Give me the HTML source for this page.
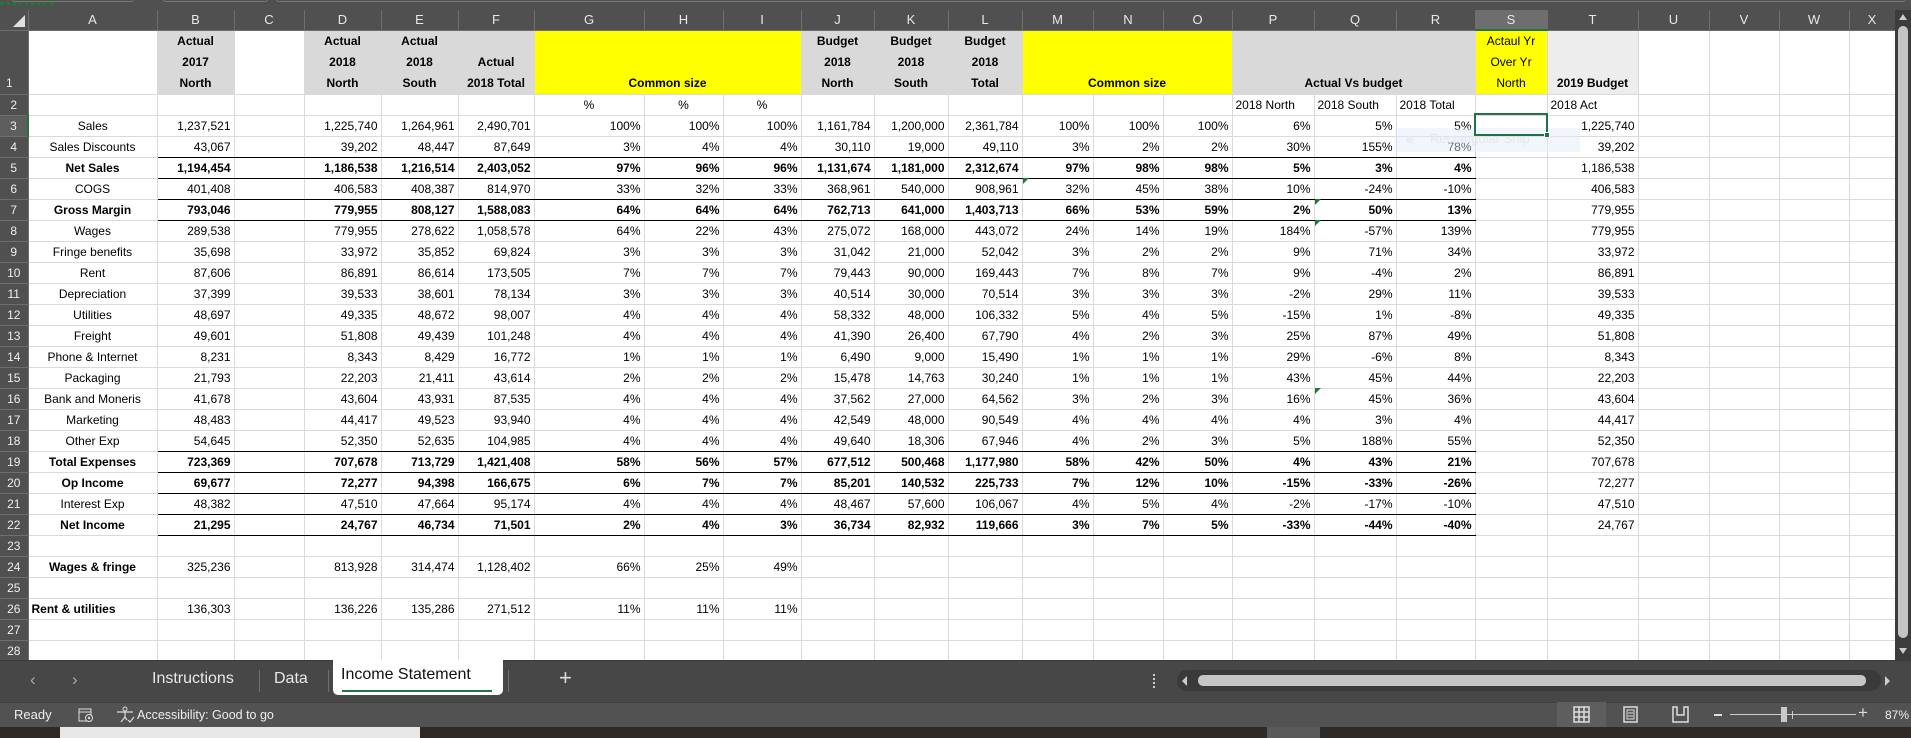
<!DOCTYPE html>
<html><head><meta charset="utf-8">
<style>
*{margin:0;padding:0;box-sizing:border-box}
body{width:1911px;height:738px;overflow:hidden;background:#505050;font-family:"Liberation Sans",Arial,sans-serif;position:relative}
#top{position:absolute;left:0;top:0;width:1911px;height:10px;background:#505050}
#grid{position:absolute;left:0;top:10px;border-collapse:collapse;table-layout:fixed;width:1895px}
#grid td,#grid th{border-right:1px solid #dadada;border-bottom:1px solid #dadada;height:21px;font-size:12px;white-space:nowrap;overflow:hidden;padding:0 3px;text-align:right;color:#000;background:#fff;font-weight:normal}
#grid tr.ch th{background:#505050;color:#e8e8e8;text-align:center;font-size:13px;height:20px;border-right:1px solid #6e6e6e;border-bottom:1px solid #6e6e6e}
#grid td.r{background:#505050;color:#eee;text-align:center;padding:0;border-right:1px solid #6e6e6e;border-bottom:1px solid #6e6e6e;font-size:12px}
#grid td.l{text-align:center}
#grid tr.b td{font-weight:bold}
#grid tr.b td.n{font-weight:normal}
#grid tr.b td.r{font-weight:normal}
#grid tr.u td:nth-child(n+3):nth-child(-n+19){border-bottom:1px solid #000}
#grid tr.h td{height:63px;vertical-align:bottom;text-align:center;font-weight:bold;line-height:21px}
.g{background:#d9d9d9!important}
.y{background:#ffff00!important}
.t{background:#ededed!important}
#grid td.c{text-align:center}
#grid td.lt{text-align:left}
.tri{position:absolute;width:0;height:0;border-top:6px solid #1e7b34;border-right:6px solid transparent}
</style></head><body>
<div id="top">
<div style="position:absolute;left:12px;top:-6px;width:122px;height:8px;border:1px solid #777;border-radius:3px"></div>
<div style="position:absolute;left:163px;top:-6px;width:105px;height:8px;border:1px solid #777;border-radius:3px"></div>
<div style="position:absolute;left:276px;top:-6px;width:1630px;height:8px;border:1px solid #777;border-radius:3px"></div>
<div style="position:absolute;left:0;top:2px;width:54px;height:3px;border-top:3px dotted #1e7b34"></div>
</div>
<table id="grid">
<colgroup>
<col style="width:28px"><col style="width:129px"><col style="width:77px"><col style="width:70px"><col style="width:77px"><col style="width:77px"><col style="width:76px"><col style="width:110px"><col style="width:79px"><col style="width:78px"><col style="width:73px"><col style="width:74px"><col style="width:74px"><col style="width:71px"><col style="width:70px"><col style="width:69px"><col style="width:82px"><col style="width:82px"><col style="width:79px"><col style="width:72px"><col style="width:91px"><col style="width:71px"><col style="width:70px"><col style="width:70px"><col style="width:46px">
</colgroup>
<tr class="ch"><th style="position:relative"><div style="position:absolute;right:3px;bottom:3px;width:0;height:0;border-left:12px solid transparent;border-bottom:12px solid #e0e0e0"></div></th><th>A</th><th>B</th><th>C</th><th>D</th><th>E</th><th>F</th><th>G</th><th>H</th><th>I</th><th>J</th><th>K</th><th>L</th><th>M</th><th>N</th><th>O</th><th>P</th><th>Q</th><th>R</th><th style="background:#6e6e6e;border-bottom:2px solid #217346">S</th><th>T</th><th>U</th><th>V</th><th>W</th><th>X</th></tr>
<tr class="h"><td class="r" style="text-align:left;padding-left:6px;font-weight:normal">1</td><td></td><td class="g">Actual<br>2017<br>North</td><td></td><td class="g">Actual<br>2018<br>North</td><td class="g">Actual<br>2018<br>South</td><td class="g">Actual<br>2018 Total</td><td class="y" colspan="3">Common size</td><td class="g">Budget<br>2018<br>North</td><td class="g">Budget<br>2018<br>South</td><td class="g">Budget<br>2018<br>Total</td><td class="y" colspan="3">Common size</td><td class="g" colspan="3">Actual Vs budget</td><td class="y" style="font-weight:normal">Actaul Yr<br>Over Yr<br>North</td><td class="t">2019 Budget</td><td></td><td></td><td></td><td></td></tr>
<tr><td class="r">2</td><td></td><td></td><td></td><td></td><td></td><td></td><td class="c">%</td><td class="c">%</td><td class="c">%</td><td></td><td></td><td></td><td></td><td></td><td></td><td class="lt">2018 North</td><td class="lt">2018 South</td><td class="lt">2018 Total</td><td></td><td class="lt">2018 Act</td><td></td><td></td><td></td><td></td></tr>
<tr><td class="r" style="border-right:2px solid #217346;background:#5e5e5e">3</td><td class="l">Sales</td><td>1,237,521</td><td></td><td>1,225,740</td><td>1,264,961</td><td>2,490,701</td><td>100%</td><td>100%</td><td>100%</td><td>1,161,784</td><td>1,200,000</td><td>2,361,784</td><td>100%</td><td>100%</td><td>100%</td><td>6%</td><td>5%</td><td>5%</td><td></td><td class="n">1,225,740</td><td></td><td></td><td></td><td></td></tr>
<tr class="u"><td class="r">4</td><td class="l">Sales Discounts</td><td>43,067</td><td></td><td>39,202</td><td>48,447</td><td>87,649</td><td>3%</td><td>4%</td><td>4%</td><td>30,110</td><td>19,000</td><td>49,110</td><td>3%</td><td>2%</td><td>2%</td><td>30%</td><td>155%</td><td>78%</td><td></td><td>39,202</td><td></td><td></td><td></td><td></td></tr>
<tr class="b u"><td class="r">5</td><td class="l">Net Sales</td><td>1,194,454</td><td></td><td>1,186,538</td><td>1,216,514</td><td>2,403,052</td><td>97%</td><td>96%</td><td>96%</td><td>1,131,674</td><td>1,181,000</td><td>2,312,674</td><td>97%</td><td>98%</td><td>98%</td><td>5%</td><td>3%</td><td>4%</td><td></td><td class="n">1,186,538</td><td></td><td></td><td></td><td></td></tr>
<tr class="u"><td class="r">6</td><td class="l">COGS</td><td>401,408</td><td></td><td>406,583</td><td>408,387</td><td>814,970</td><td>33%</td><td>32%</td><td>33%</td><td>368,961</td><td>540,000</td><td>908,961</td><td>32%</td><td>45%</td><td>38%</td><td>10%</td><td>-24%</td><td>-10%</td><td></td><td>406,583</td><td></td><td></td><td></td><td></td></tr>
<tr class="b u"><td class="r">7</td><td class="l">Gross Margin</td><td>793,046</td><td></td><td>779,955</td><td>808,127</td><td>1,588,083</td><td>64%</td><td>64%</td><td>64%</td><td>762,713</td><td>641,000</td><td>1,403,713</td><td>66%</td><td>53%</td><td>59%</td><td>2%</td><td>50%</td><td>13%</td><td></td><td class="n">779,955</td><td></td><td></td><td></td><td></td></tr>
<tr><td class="r">8</td><td class="l">Wages</td><td>289,538</td><td></td><td>779,955</td><td>278,622</td><td>1,058,578</td><td>64%</td><td>22%</td><td>43%</td><td>275,072</td><td>168,000</td><td>443,072</td><td>24%</td><td>14%</td><td>19%</td><td>184%</td><td>-57%</td><td>139%</td><td></td><td>779,955</td><td></td><td></td><td></td><td></td></tr>
<tr><td class="r">9</td><td class="l">Fringe benefits</td><td>35,698</td><td></td><td>33,972</td><td>35,852</td><td>69,824</td><td>3%</td><td>3%</td><td>3%</td><td>31,042</td><td>21,000</td><td>52,042</td><td>3%</td><td>2%</td><td>2%</td><td>9%</td><td>71%</td><td>34%</td><td></td><td>33,972</td><td></td><td></td><td></td><td></td></tr>
<tr><td class="r">10</td><td class="l">Rent</td><td>87,606</td><td></td><td>86,891</td><td>86,614</td><td>173,505</td><td>7%</td><td>7%</td><td>7%</td><td>79,443</td><td>90,000</td><td>169,443</td><td>7%</td><td>8%</td><td>7%</td><td>9%</td><td>-4%</td><td>2%</td><td></td><td>86,891</td><td></td><td></td><td></td><td></td></tr>
<tr><td class="r">11</td><td class="l">Depreciation</td><td>37,399</td><td></td><td>39,533</td><td>38,601</td><td>78,134</td><td>3%</td><td>3%</td><td>3%</td><td>40,514</td><td>30,000</td><td>70,514</td><td>3%</td><td>3%</td><td>3%</td><td>-2%</td><td>29%</td><td>11%</td><td></td><td>39,533</td><td></td><td></td><td></td><td></td></tr>
<tr><td class="r">12</td><td class="l">Utilities</td><td>48,697</td><td></td><td>49,335</td><td>48,672</td><td>98,007</td><td>4%</td><td>4%</td><td>4%</td><td>58,332</td><td>48,000</td><td>106,332</td><td>5%</td><td>4%</td><td>5%</td><td>-15%</td><td>1%</td><td>-8%</td><td></td><td>49,335</td><td></td><td></td><td></td><td></td></tr>
<tr><td class="r">13</td><td class="l">Freight</td><td>49,601</td><td></td><td>51,808</td><td>49,439</td><td>101,248</td><td>4%</td><td>4%</td><td>4%</td><td>41,390</td><td>26,400</td><td>67,790</td><td>4%</td><td>2%</td><td>3%</td><td>25%</td><td>87%</td><td>49%</td><td></td><td>51,808</td><td></td><td></td><td></td><td></td></tr>
<tr><td class="r">14</td><td class="l">Phone &amp; Internet</td><td>8,231</td><td></td><td>8,343</td><td>8,429</td><td>16,772</td><td>1%</td><td>1%</td><td>1%</td><td>6,490</td><td>9,000</td><td>15,490</td><td>1%</td><td>1%</td><td>1%</td><td>29%</td><td>-6%</td><td>8%</td><td></td><td>8,343</td><td></td><td></td><td></td><td></td></tr>
<tr><td class="r">15</td><td class="l">Packaging</td><td>21,793</td><td></td><td>22,203</td><td>21,411</td><td>43,614</td><td>2%</td><td>2%</td><td>2%</td><td>15,478</td><td>14,763</td><td>30,240</td><td>1%</td><td>1%</td><td>1%</td><td>43%</td><td>45%</td><td>44%</td><td></td><td>22,203</td><td></td><td></td><td></td><td></td></tr>
<tr><td class="r">16</td><td class="l">Bank and Moneris</td><td>41,678</td><td></td><td>43,604</td><td>43,931</td><td>87,535</td><td>4%</td><td>4%</td><td>4%</td><td>37,562</td><td>27,000</td><td>64,562</td><td>3%</td><td>2%</td><td>3%</td><td>16%</td><td>45%</td><td>36%</td><td></td><td>43,604</td><td></td><td></td><td></td><td></td></tr>
<tr><td class="r">17</td><td class="l">Marketing</td><td>48,483</td><td></td><td>44,417</td><td>49,523</td><td>93,940</td><td>4%</td><td>4%</td><td>4%</td><td>42,549</td><td>48,000</td><td>90,549</td><td>4%</td><td>4%</td><td>4%</td><td>4%</td><td>3%</td><td>4%</td><td></td><td>44,417</td><td></td><td></td><td></td><td></td></tr>
<tr class="u"><td class="r">18</td><td class="l">Other Exp</td><td>54,645</td><td></td><td>52,350</td><td>52,635</td><td>104,985</td><td>4%</td><td>4%</td><td>4%</td><td>49,640</td><td>18,306</td><td>67,946</td><td>4%</td><td>2%</td><td>3%</td><td>5%</td><td>188%</td><td>55%</td><td></td><td>52,350</td><td></td><td></td><td></td><td></td></tr>
<tr class="b u"><td class="r">19</td><td class="l">Total Expenses</td><td>723,369</td><td></td><td>707,678</td><td>713,729</td><td>1,421,408</td><td>58%</td><td>56%</td><td>57%</td><td>677,512</td><td>500,468</td><td>1,177,980</td><td>58%</td><td>42%</td><td>50%</td><td>4%</td><td>43%</td><td>21%</td><td></td><td class="n">707,678</td><td></td><td></td><td></td><td></td></tr>
<tr class="b u"><td class="r">20</td><td class="l">Op Income</td><td>69,677</td><td></td><td>72,277</td><td>94,398</td><td>166,675</td><td>6%</td><td>7%</td><td>7%</td><td>85,201</td><td>140,532</td><td>225,733</td><td>7%</td><td>12%</td><td>10%</td><td>-15%</td><td>-33%</td><td>-26%</td><td></td><td class="n">72,277</td><td></td><td></td><td></td><td></td></tr>
<tr class="u"><td class="r">21</td><td class="l">Interest Exp</td><td>48,382</td><td></td><td>47,510</td><td>47,664</td><td>95,174</td><td>4%</td><td>4%</td><td>4%</td><td>48,467</td><td>57,600</td><td>106,067</td><td>4%</td><td>5%</td><td>4%</td><td>-2%</td><td>-17%</td><td>-10%</td><td></td><td>47,510</td><td></td><td></td><td></td><td></td></tr>
<tr class="b u"><td class="r">22</td><td class="l">Net Income</td><td>21,295</td><td></td><td>24,767</td><td>46,734</td><td>71,501</td><td>2%</td><td>4%</td><td>3%</td><td>36,734</td><td>82,932</td><td>119,666</td><td>3%</td><td>7%</td><td>5%</td><td>-33%</td><td>-44%</td><td>-40%</td><td></td><td class="n">24,767</td><td></td><td></td><td></td><td></td></tr>
<tr><td class="r">23</td><td></td><td></td><td></td><td></td><td></td><td></td><td></td><td></td><td></td><td></td><td></td><td></td><td></td><td></td><td></td><td></td><td></td><td></td><td></td><td></td><td></td><td></td><td></td><td></td></tr>
<tr><td class="r">24</td><td class="l" style="font-weight:bold">Wages &amp; fringe</td><td>325,236</td><td></td><td>813,928</td><td>314,474</td><td>1,128,402</td><td>66%</td><td>25%</td><td>49%</td><td></td><td></td><td></td><td></td><td></td><td></td><td></td><td></td><td></td><td></td><td></td><td></td><td></td><td></td><td></td></tr>
<tr><td class="r">25</td><td></td><td></td><td></td><td></td><td></td><td></td><td></td><td></td><td></td><td></td><td></td><td></td><td></td><td></td><td></td><td></td><td></td><td></td><td></td><td></td><td></td><td></td><td></td><td></td></tr>
<tr><td class="r">26</td><td class="lt" style="font-weight:bold">Rent &amp; utilities</td><td>136,303</td><td></td><td>136,226</td><td>135,286</td><td>271,512</td><td>11%</td><td>11%</td><td>11%</td><td></td><td></td><td></td><td></td><td></td><td></td><td></td><td></td><td></td><td></td><td></td><td></td><td></td><td></td><td></td></tr>
<tr><td class="r">27</td><td></td><td></td><td></td><td></td><td></td><td></td><td></td><td></td><td></td><td></td><td></td><td></td><td></td><td></td><td></td><td></td><td></td><td></td><td></td><td></td><td></td><td></td><td></td><td></td></tr>
<tr><td class="r">28</td><td></td><td></td><td></td><td></td><td></td><td></td><td></td><td></td><td></td><td></td><td></td><td></td><td></td><td></td><td></td><td></td><td></td><td></td><td></td><td></td><td></td><td></td><td></td><td></td></tr>
</table>

<!-- error triangles -->
<div class="tri" style="left:1023px;top:178px"></div>
<div class="tri" style="left:1315px;top:199px"></div>
<div class="tri" style="left:1315px;top:220px"></div>
<div class="tri" style="left:1315px;top:388px"></div>

<!-- snip tooltip -->
<div style="position:absolute;left:1395px;top:128px;width:185px;height:24px;background:rgba(225,236,250,0.45)"></div>
<div style="position:absolute;left:1406px;top:136px;width:7px;height:7px;border-radius:50%;background:#ececec"></div>
<div style="position:absolute;left:1430px;top:131px;font-size:13px;color:#e6e6e6">Rectangular Snip</div>

<!-- selected cell -->
<div style="position:absolute;left:1474px;top:113px;width:74px;height:23px;border:2px solid #217346"></div>
<div style="position:absolute;left:1544px;top:132px;width:6px;height:6px;background:#217346;border:1px solid #fff"></div>

<!-- vertical scrollbar -->
<div style="position:absolute;left:1895px;top:10px;width:16px;height:650px;background:#3c3c3c"></div>
<div style="position:absolute;left:1899px;top:14px;width:0;height:0;border-left:4px solid transparent;border-right:4px solid transparent;border-bottom:6px solid #ccc"></div>
<div style="position:absolute;left:1898px;top:26px;width:10px;height:612px;background:#c4c4c4;border-radius:5px"></div>
<div style="position:absolute;left:1899px;top:648px;width:0;height:0;border-left:4px solid transparent;border-right:4px solid transparent;border-top:6px solid #ccc"></div>

<!-- tab bar -->
<div style="position:absolute;left:0;top:660px;width:1911px;height:42px;background:#474747;border-top:1px solid #3a3a3a"></div>
<div style="position:absolute;left:30px;top:670px;font-size:17px;color:#aaa">&lsaquo;</div>
<div style="position:absolute;left:72px;top:670px;font-size:17px;color:#aaa">&rsaquo;</div>
<div style="position:absolute;left:152px;top:670px;font-size:16px;color:#e8e8e8">Instructions</div>
<div style="position:absolute;left:259px;top:670px;width:1px;height:22px;background:#707070"></div>
<div style="position:absolute;left:274px;top:670px;font-size:16px;color:#e8e8e8">Data</div>
<div style="position:absolute;left:328px;top:670px;width:1px;height:22px;background:#707070"></div>
<div style="position:absolute;left:333px;top:660px;width:170px;height:35px;background:#fff;border-radius:0 0 5px 5px"></div>
<div style="position:absolute;left:341px;top:666px;font-size:16px;color:#111">Income Statement</div>
<div style="position:absolute;left:342px;top:690px;width:150px;height:2px;background:#217346"></div>
<div style="position:absolute;left:508px;top:670px;width:1px;height:22px;background:#707070"></div>
<div style="position:absolute;left:559px;top:665px;font-size:22px;color:#ddd">+</div>
<div style="position:absolute;left:1153px;top:674px;width:2px;height:14px;border-left:2px dotted #ccc"></div>
<div style="position:absolute;left:1177px;top:670px;width:704px;height:21px;background:#3a3a3a;border-radius:10px"></div>
<div style="position:absolute;left:1182px;top:676px;width:0;height:0;border-top:5px solid transparent;border-bottom:5px solid transparent;border-right:5px solid #ccc"></div>
<div style="position:absolute;left:1198px;top:675px;width:668px;height:11px;background:#c6c6c6;border-radius:5px"></div>
<div style="position:absolute;left:1885px;top:676px;width:0;height:0;border-top:5px solid transparent;border-bottom:5px solid transparent;border-left:5px solid #ccc"></div>

<!-- status bar -->
<div style="position:absolute;left:0;top:702px;width:1911px;height:25px;background:#525252;border-top:1px solid #3f3f3f"></div>
<div style="position:absolute;left:14px;top:707px;font-size:13px;color:#eee">Ready</div>
<svg style="position:absolute;left:78px;top:707px" width="16" height="16" viewBox="0 0 16 16"><rect x="1" y="2" width="12" height="12" fill="none" stroke="#ddd"/><line x1="1" y1="5" x2="13" y2="5" stroke="#ddd"/><circle cx="11" cy="11" r="3.5" fill="#525252" stroke="#ddd"/><circle cx="11" cy="11" r="1.2" fill="#ddd"/></svg>
<svg style="position:absolute;left:115px;top:706px" width="20" height="17" viewBox="0 0 20 17"><circle cx="10" cy="3" r="2" fill="none" stroke="#ddd"/><path d="M2 6 L18 6 M10 6 L10 11 L6 16 M10 11 L12 14 M13 14 L15 16 L19 11" fill="none" stroke="#ddd" stroke-width="1.2"/></svg>
<div style="position:absolute;left:137px;top:708px;font-size:12.5px;color:#eee">Accessibility: Good to go</div>
<div style="position:absolute;left:1557px;top:702px;width:49px;height:25px;background:#5e5e5e"></div>
<svg style="position:absolute;left:1573px;top:706px" width="17" height="17" viewBox="0 0 17 17"><rect x="1" y="1" width="15" height="15" fill="none" stroke="#ddd" stroke-width="1.5"/><path d="M6 1V16M11 1V16M1 6H16M1 11H16" stroke="#ddd" stroke-width="1.5"/></svg>
<svg style="position:absolute;left:1622px;top:706px" width="17" height="17" viewBox="0 0 17 17"><rect x="2" y="1" width="13" height="15" fill="none" stroke="#ddd" stroke-width="1.5"/><rect x="5" y="4" width="7" height="9" fill="none" stroke="#ddd"/><path d="M6 7H11M6 10H11" stroke="#ddd"/></svg>
<svg style="position:absolute;left:1672px;top:706px" width="17" height="17" viewBox="0 0 17 17"><path d="M1 1V16H16V1H12V9H5V1Z" fill="none" stroke="#ddd" stroke-width="1.5"/></svg>
<div style="position:absolute;left:1714px;top:714px;width:8px;height:1.5px;background:#ddd"></div>
<div style="position:absolute;left:1730px;top:714px;width:126px;height:1px;background:#ccc"></div>
<div style="position:absolute;left:1781px;top:707px;width:6px;height:15px;background:#c8c8c8"></div>
<div style="position:absolute;left:1792px;top:711px;width:1px;height:8px;background:#ccc"></div>
<div style="position:absolute;left:1858px;top:703px;font-size:17px;color:#ddd">+</div>
<div style="position:absolute;left:1885px;top:708px;font-size:12px;color:#eee">87%</div>

<!-- taskbar -->
<div style="position:absolute;left:0;top:727px;width:1911px;height:11px;background:#2d2a27"></div>
<div style="position:absolute;left:60px;top:727px;width:360px;height:11px;background:#e8e8e8"></div>
<div style="position:absolute;left:1267px;top:727px;width:53px;height:11px;background:#5a5a5a"></div>
</body></html>
